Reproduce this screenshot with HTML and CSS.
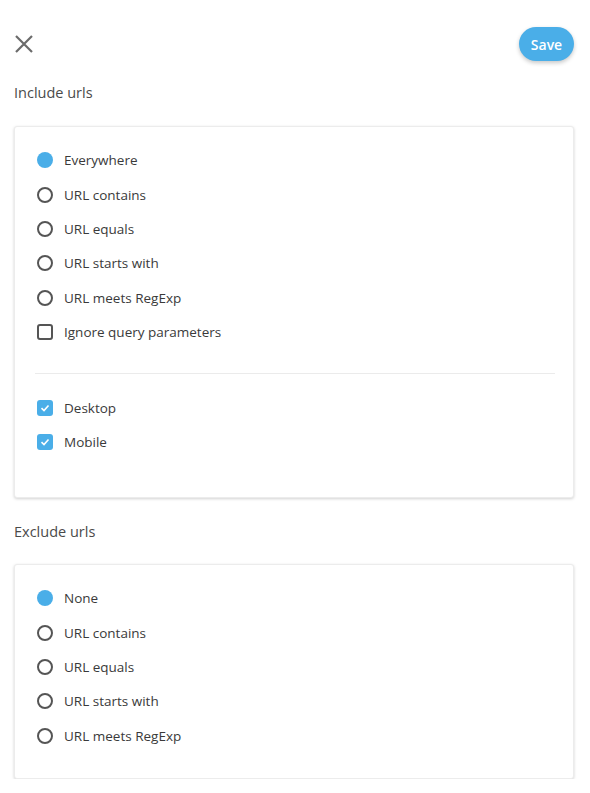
FILE: index.html
```html
<!DOCTYPE html>
<html>
<head>
<meta charset="utf-8">
<link rel="stylesheet" href="styles.css">
</head>
<body>
<div class="page">
  <div class="header">
    <button class="close" aria-label="Close">
      <svg width="20" height="20" viewBox="0 0 20 20"><path d="M2 2 L18 18 M18 2 L2 18" stroke="#6b6b6b" stroke-width="2.2" fill="none"/></svg>
    </button>
    <button class="save">Save</button>
  </div>

  <div class="section-title">Include urls</div>
  <div class="card card-include">
    <div class="row"><span class="radio on"></span><span class="label">Everywhere</span></div>
    <div class="row"><span class="radio"></span><span class="label">URL contains</span></div>
    <div class="row"><span class="radio"></span><span class="label">URL equals</span></div>
    <div class="row"><span class="radio"></span><span class="label">URL starts with</span></div>
    <div class="row"><span class="radio"></span><span class="label">URL meets RegExp</span></div>
    <div class="row"><span class="check"></span><span class="label">Ignore query parameters</span></div>
    <div class="divider"></div>
    <div class="row"><span class="check on"><svg width="10" height="10" viewBox="0 0 10 10"><path d="M1.5 5.2 L4 7.5 L8.5 2.5" stroke="#fff" stroke-width="1.6" fill="none"/></svg></span><span class="label">Desktop</span></div>
    <div class="row"><span class="check on"><svg width="10" height="10" viewBox="0 0 10 10"><path d="M1.5 5.2 L4 7.5 L8.5 2.5" stroke="#fff" stroke-width="1.6" fill="none"/></svg></span><span class="label">Mobile</span></div>
  </div>

  <div class="section-title">Exclude urls</div>
  <div class="card card-exclude">
    <div class="row"><span class="radio on"></span><span class="label">None</span></div>
    <div class="row"><span class="radio"></span><span class="label">URL contains</span></div>
    <div class="row"><span class="radio"></span><span class="label">URL equals</span></div>
    <div class="row"><span class="radio"></span><span class="label">URL starts with</span></div>
    <div class="row"><span class="radio"></span><span class="label">URL meets RegExp</span></div>
  </div>
</div>
</body>
</html>
```
FILE: styles.css
```css
* { box-sizing: border-box; }
body {
  margin: 0;
  background: #fff;
  font-family: "Open Sans", "Noto Sans", sans-serif;
  color: #3a3a3a;
}
.page {
  padding: 27px 16px 0 14px;
}
.header {
  display: flex;
  justify-content: space-between;
  align-items: center;
  height: 34px;
}
.close {
  border: 0;
  background: none;
  padding: 0;
  width: 20px;
  height: 20px;
  display: flex;
  cursor: pointer;
}
.save {
  border: 0;
  background: #4aaee8;
  color: #fff;
  font-family: "Open Sans", "Noto Sans", sans-serif;
  font-weight: 600;
  font-size: 14px;
  height: 34px;
  width: 55px;
  border-radius: 17px;
  box-shadow: 0 2px 4px rgba(0,0,0,0.22);
  padding: 0;
  cursor: pointer;
}
.section-title {
  font-size: 14.5px;
  line-height: 20px;
  color: #4a4a4a;
  margin-top: 22px;
  margin-bottom: 23px;
}
.card + .section-title {
  margin-top: 24px;
  margin-bottom: 22px;
}
.card {
  background: #fff;
  border: 1px solid #ececec;
  border-radius: 3px;
  box-shadow: 0 1px 3px rgba(0,0,0,0.18);
  padding: 16px 20px 38px 22px;
}
.card-exclude {
  padding-bottom: 25px;
}
.row {
  display: flex;
  align-items: center;
  height: 34.4px;
  font-size: 13.5px;
}
.label {
  margin-left: 11px;
  color: #3a3a3a;
}
.radio {
  width: 16px;
  height: 16px;
  border-radius: 50%;
  border: 2px solid #555;
  flex: none;
}
.radio.on {
  border: 0;
  background: #4aaee8;
}
.check {
  width: 16px;
  height: 16px;
  border-radius: 3px;
  border: 2px solid #555;
  flex: none;
  display: flex;
  align-items: center;
  justify-content: center;
}
.check.on {
  border: 0;
  background: #4aaee8;
}
.divider {
  height: 1px;
  background: #ebebeb;
  margin: 24px -2px 16px -2px;
}
```
